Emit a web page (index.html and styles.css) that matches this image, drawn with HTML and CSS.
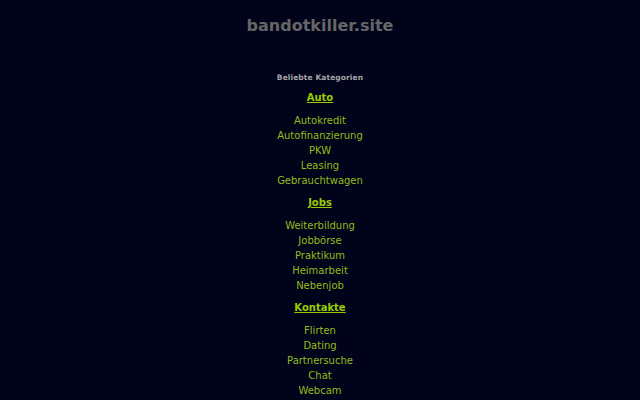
FILE: index.html
```html
<!DOCTYPE html>
<html lang="de">
<head>
<meta charset="utf-8">
<title>bandotkiller.site</title>
<link rel="stylesheet" href="styles.css">
</head>
<body>
<header class="top">
  <h1 class="site">bandotkiller.site</h1>
</header>
<main class="cats">
  <h2 class="cats-title">Beliebte Kategorien</h2>
  <section class="group">
    <h3 class="group-title"><a href="#">Auto</a></h3>
    <ul class="links">
      <li><a href="#">Autokredit</a></li>
      <li><a href="#">Autofinanzierung</a></li>
      <li><a href="#">PKW</a></li>
      <li><a href="#">Leasing</a></li>
      <li><a href="#">Gebrauchtwagen</a></li>
    </ul>
  </section>
  <section class="group">
    <h3 class="group-title"><a href="#">Jobs</a></h3>
    <ul class="links">
      <li><a href="#">Weiterbildung</a></li>
      <li><a href="#">Jobbörse</a></li>
      <li><a href="#">Praktikum</a></li>
      <li><a href="#">Heimarbeit</a></li>
      <li><a href="#">Nebenjob</a></li>
    </ul>
  </section>
  <section class="group">
    <h3 class="group-title"><a href="#">Kontakte</a></h3>
    <ul class="links">
      <li><a href="#">Flirten</a></li>
      <li><a href="#">Dating</a></li>
      <li><a href="#">Partnersuche</a></li>
      <li><a href="#">Chat</a></li>
      <li><a href="#">Webcam</a></li>
    </ul>
  </section>
</main>
</body>
</html>
```
FILE: styles.css
```css
html, body {
  margin: 0;
  padding: 0;
  background: #01031a;
  font-family: "DejaVu Sans", sans-serif;
}
.top {
  text-align: center;
  padding-top: 16px;
}
.site {
  margin: 0;
  font-size: 16px;
  line-height: 20px;
  font-weight: bold;
  color: #666666;
}
.cats {
  text-align: center;
  padding-top: 36px;
}
.cats-title {
  margin: 0;
  font-size: 7.5px;
  line-height: 12px;
  font-weight: bold;
  color: #a6a6a6;
  letter-spacing: 0.1px;
}
.group-title {
  margin: 6px 0 0;
  font-size: 10px;
  line-height: 15px;
  font-weight: bold;
}
.group-title a {
  color: #99cc00;
  text-decoration: underline;
}
.links {
  list-style: none;
  margin: 8px 0 0;
  padding: 0;
}
.links li {
  font-size: 10px;
  line-height: 15px;
}
.links a {
  color: #93bc18;
  text-decoration: none;
}
.group + .group .group-title {
  margin-top: 7px;
}
```
